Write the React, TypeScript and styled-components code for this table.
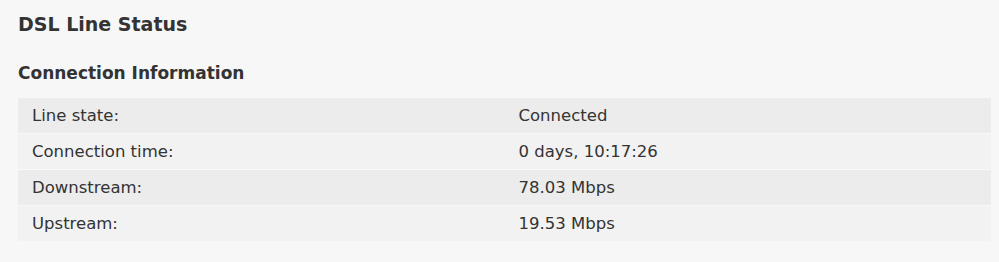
import * as React from 'react';
import styled, { createGlobalStyle } from 'styled-components';

interface Row {
	label: string;
	value: string;
}

const rows: Row[] = [
	{ label: 'Line state:', value: 'Connected' },
	{ label: 'Connection time:', value: '0 days, 10:17:26' },
	{ label: 'Downstream:', value: '78.03 Mbps' },
	{ label: 'Upstream:', value: '19.53 Mbps' },
];

const App = () => {
	return (
		<Page>
			<GlobalStyle />
			<Title>DSL Line Status</Title>
			<SectionTitle>Connection Information</SectionTitle>
			<InfoTable>
				<tbody>
					{rows.map((row, i) => (
						<InfoRow key={row.label} odd={i % 2 === 0}>
							<Cell>{row.label}</Cell>
							<Cell>{row.value}</Cell>
						</InfoRow>
					))}
				</tbody>
			</InfoTable>
		</Page>
	);
};

export default App;

const fontStack = "'DejaVu Sans', Verdana, sans-serif";
const textColor = '#333333';

const GlobalStyle = createGlobalStyle`
	html, body {
		margin: 0;
		padding: 0;
		background-color: #f7f7f7;
	}
`;

const Page = styled.div`
	box-sizing: border-box;
	width: 999px;
	height: 262px;
	padding: 12px 8px 0 18px;
	font-family: ${fontStack};
	color: ${textColor};
	background-color: #f7f7f7;
`;

const Title = styled.h1`
	margin: 0;
	font-size: 19px;
	line-height: 24px;
	font-weight: bold;
`;

const SectionTitle = styled.h2`
	margin: 26px 0 0;
	font-size: 17px;
	line-height: 22px;
	font-weight: bold;
`;

const InfoTable = styled.table`
	margin-top: 14px;
	width: 973px;
	border-collapse: collapse;
	table-layout: fixed;
	font-size: 16.5px;
`;

const InfoRow = styled.tr<{ odd: boolean }>`
	background-color: ${p => (p.odd ? '#ececec' : '#f2f2f2')};
	& + & {
		border-top: 1px solid #f9f9f9;
	}
`;

const Cell = styled.td`
	width: 50%;
	height: 35px;
	padding: 0 14px;
	box-sizing: border-box;
	line-height: 35px;
	vertical-align: middle;
`;
